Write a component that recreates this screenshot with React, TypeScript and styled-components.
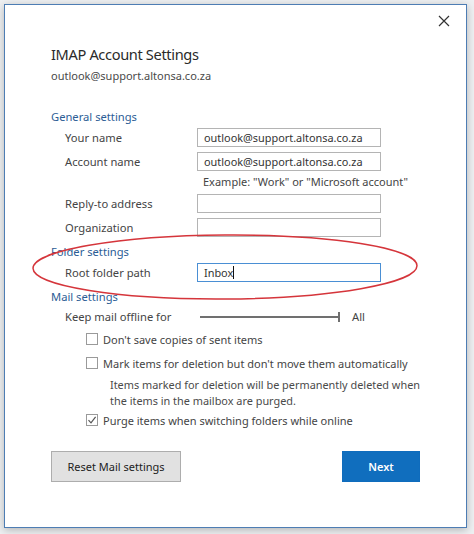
import styled, { createGlobalStyle } from 'styled-components';

const Global = createGlobalStyle`
  html, body {
    margin: 0;
    padding: 0;
    background: #eef0f2;
  }
  body {
    font-family: 'Noto Sans', 'Open Sans', sans-serif;
    color: #3b3b3b;
  }
`;

const Screen = styled.div`
  width: 474px;
  height: 534px;
  padding: 4px 0 0 4px;
  box-sizing: border-box;
  overflow: hidden;
`;

const Dialog = styled.div`
  position: relative;
  width: 463px;
  height: 524px;
  box-sizing: border-box;
  background: #fff;
  border: 1px solid #4d7db4;
  box-shadow: 0 2px 8px rgba(0, 0, 0, 0.25);
  padding: 0 0 0 46px;
  font-size: 11px;
`;

const TopBar = styled.div`
  display: flex;
  justify-content: flex-end;
  height: 40px;
  padding: 9px 15px 0 0;
  box-sizing: border-box;
`;

const Close = styled.button`
  border: none;
  background: none;
  padding: 0;
  width: 14px;
  height: 14px;
  cursor: pointer;
  svg {
    display: block;
  }
`;

const Title = styled.h1`
  margin: 0;
  font-size: 14.6px;
  letter-spacing: -0.35px;
  font-weight: 400;
  color: #2a2a2a;
  line-height: 18px;
`;

const Sub = styled.div`
  margin-top: 5px;
  font-size: 11px;
  color: #4a4a4a;
  line-height: 15px;
`;

const Heading = styled.div<{ $top: number }>`
  margin-top: ${(p) => p.$top}px;
  color: #2c5d95;
  font-size: 11.2px;
  line-height: 15px;
  height: 15px;
`;

const Row = styled.div<{ $top: number }>`
  display: grid;
  grid-template-columns: 132px 184px;
  align-items: center;
  margin-top: ${(p) => p.$top}px;
  padding-left: 14px;
  height: 19px;
`;

const Label = styled.div`
  font-size: 11.2px;
  color: #444;
  white-space: nowrap;
`;

const Field = styled.div<{ $focus?: boolean }>`
  height: 19px;
  box-sizing: border-box;
  border: 1px solid ${(p) => (p.$focus ? '#4a8fd4' : '#b4b4b4')};
  padding: 0 0 0 6px;
  font-size: 10.9px;
  line-height: 17px;
  color: #333;
  white-space: nowrap;
`;

const Caret = styled.span`
  display: inline-block;
  width: 1px;
  height: 13px;
  background: #111;
  vertical-align: -2px;
`;

const Hint = styled.div`
  margin-top: 4px;
  padding-left: 152px;
  font-size: 11px;
  line-height: 14px;
  color: #444;
`;

const SliderRow = styled.div`
  display: grid;
  grid-template-columns: 132px auto auto;
  justify-content: start;
  align-items: center;
  margin-top: 5px;
  padding-left: 14px;
  height: 14px;
`;

const Track = styled.div`
  position: relative;
  width: 140px;
  height: 2px;
  margin-left: 3px;
  background: #707070;
  &::after {
    content: '';
    position: absolute;
    right: 0;
    top: -4px;
    width: 2px;
    height: 10px;
    background: #707070;
  }
`;

const All = styled.span`
  margin-left: 12px;
  font-size: 11.2px;
  color: #444;
`;

const Check = styled.div<{ $top: number }>`
  display: flex;
  align-items: center;
  gap: 5px;
  margin-top: ${(p) => p.$top}px;
  padding-left: 35px;
  height: 14px;
  font-size: 11px;
  color: #444;
  white-space: nowrap;
`;

const Box = styled.span`
  width: 12px;
  height: 12px;
  box-sizing: border-box;
  border: 1px solid #9a9a9a;
  background: #fff;
  display: flex;
  align-items: center;
  justify-content: center;
`;

const Note = styled.div`
  margin-top: 7px;
  padding-left: 59px;
  font-size: 10.9px;
  line-height: 16px;
  color: #4a4a4a;
  white-space: nowrap;
`;

const Footer = styled.div`
  display: flex;
  justify-content: space-between;
  margin-top: 24px;
  width: 369px;
`;

const Button = styled.button<{ $primary?: boolean }>`
  height: 31px;
  box-sizing: border-box;
  font-family: inherit;
  font-size: 11px;
  font-weight: ${(p) => (p.$primary ? 600 : 400)};
  border: 1px solid ${(p) => (p.$primary ? '#0f6cbd' : '#adadad')};
  background: ${(p) => (p.$primary ? '#106ebe' : '#e1e1e1')};
  color: ${(p) => (p.$primary ? '#fff' : '#222')};
  width: ${(p) => (p.$primary ? '78px' : '130px')};
  padding: 0;
  cursor: pointer;
`;

const Ring = styled.svg`
  position: absolute;
  left: 22px;
  top: 226px;
  pointer-events: none;
`;

const CheckBox = ({ checked }: { checked?: boolean }) => (
  <Box>
    {checked && (
      <svg width="10" height="10" viewBox="0 0 10 10">
        <path d="M1.5 5.2 L4 7.8 L8.6 1.8" fill="none" stroke="#555" strokeWidth="1.2" />
      </svg>
    )}
  </Box>
);

export default function App() {
  return (
    <Screen>
      <Global />
      <Dialog>
        <TopBar>
          <Close aria-label="Close">
            <svg width="14" height="14" viewBox="0 0 14 14">
              <path d="M2 2 L12 12 M12 2 L2 12" stroke="#333" strokeWidth="1.2" />
            </svg>
          </Close>
        </TopBar>
        <Title>IMAP Account Settings</Title>
        <Sub>outlook@support.altonsa.co.za</Sub>

        <Heading $top={26}>General settings</Heading>
        <Row $top={4}>
          <Label>Your name</Label>
          <Field>outlook@support.altonsa.co.za</Field>
        </Row>
        <Row $top={5}>
          <Label>Account name</Label>
          <Field>outlook@support.altonsa.co.za</Field>
        </Row>
        <Hint>Example: "Work" or "Microsoft account"</Hint>
        <Row $top={5}>
          <Label>Reply-to address</Label>
          <Field />
        </Row>
        <Row $top={5}>
          <Label>Organization</Label>
          <Field />
        </Row>

        <Heading $top={7}>Folder settings</Heading>
        <Row $top={4}>
          <Label>Root folder path</Label>
          <Field $focus>
            Inbox
            <Caret />
          </Field>
        </Row>

        <Heading $top={7}>Mail settings</Heading>
        <SliderRow>
          <Label>Keep mail offline for</Label>
          <Track />
          <All>All</All>
        </SliderRow>
        <Check $top={9}>
          <CheckBox />
          Don't save copies of sent items
        </Check>
        <Check $top={10}>
          <CheckBox />
          Mark items for deletion but don't move them automatically
        </Check>
        <Note>
          Items marked for deletion will be permanently deleted when
          <br />
          the items in the mailbox are purged.
        </Note>
        <Check $top={4}>
          <CheckBox checked />
          Purge items when switching folders while online
        </Check>

        <Footer>
          <Button>Reset Mail settings</Button>
          <Button $primary>Next</Button>
        </Footer>

        <Ring width="396" height="70" viewBox="0 0 396 70">
          <ellipse
            cx="198"
            cy="36"
            rx="192"
            ry="32"
            fill="none"
            stroke="#d5353b"
            strokeWidth="1.5"
            transform="rotate(-0.4 198 36)"
          />
        </Ring>
      </Dialog>
    </Screen>
  );
}
